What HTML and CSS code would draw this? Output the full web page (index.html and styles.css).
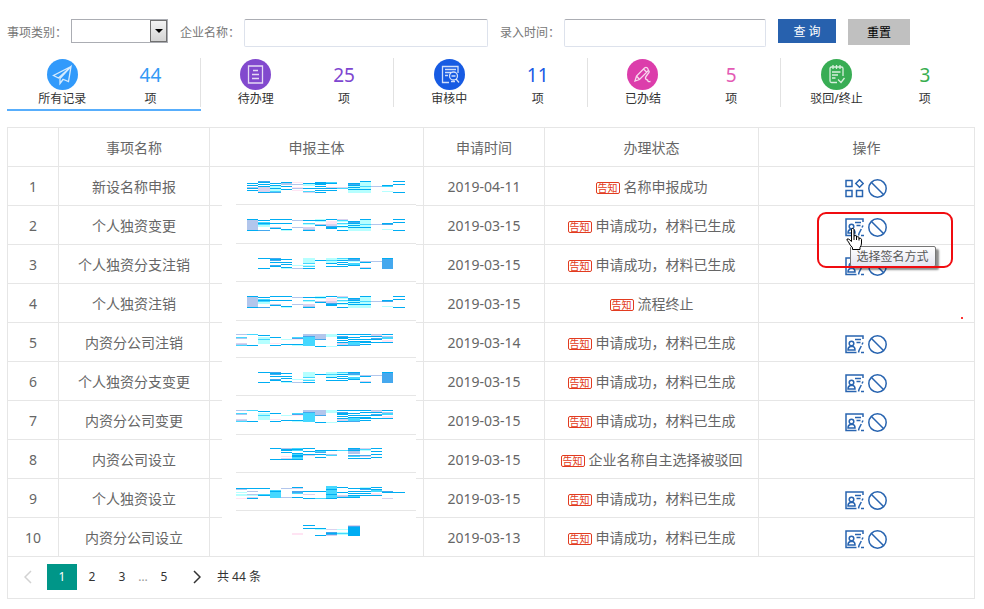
FILE: index.html
```html
<!DOCTYPE html>
<html lang="zh-CN">
    <head>
        <meta charset="utf-8">
        <title>办理记录</title>
        <link rel="stylesheet" href="styles.css">
    </head>
    <body>
        <svg class="icon-defs" aria-hidden="true">
            <symbol id="i-sign" viewBox="0 0 19 19">
                <path d="M11.500 17.500H1V1H18V4M10 4.500h6M11.500 7.500h4"/>
                <circle cx="6.500" cy="8.500" r="2.300"/>
                <path d="M3 15q0-3 2.500-3.500h2.500q2 .5 2 3.500z"/>
                <path d="M18 7.500l-1 2M16.300 11l-2.300 4.500-.5 2M16 17.500h3"/>
            </symbol>
            <symbol id="i-grid" viewBox="0 0 19 19">
                <rect x="1" y="1.500" width="6" height="6"/>
                <rect x="1" y="11.500" width="6" height="6"/>
                <rect x="11.500" y="11.500" width="6" height="6"/>
                <path d="M14.500 .8l3.700 3.700-3.700 3.700-3.700-3.700z"/>
            </symbol>
            <symbol id="i-ban" viewBox="0 0 19 19">
                <circle cx="9.500" cy="9.500" r="8.700"/>
                <path d="M3.500 3.500l12 12"/>
            </symbol>
        </svg>

        <form class="search">
            <label for="s-type">事项类别：</label>
            <span class="select-box">
                <select id="s-type"><option></option></select>
                <span class="select-arrow"></span>
            </span>
            <label for="s-name">企业名称：</label>
            <input type="text" id="s-name" class="s-name">
            <label for="s-time">录入时间：</label>
            <input type="text" id="s-time" class="s-time">
            <button type="button" class="btn-query">查 询</button>
            <button type="reset" class="btn-reset">重置</button>
        </form>

        <ul class="tabs">
            <li class="active">
                <a href="#all">
                    <span class="tab-name">
                        <svg class="tab-icon" viewBox="0 0 31 31">
                            <circle cx="15.500" cy="15.500" r="15.500" fill="#319afb"/>
                            <path d="M24 7.500L6.500 16.500l5 2.500L24 7.500l-2.500 15-6-2.500M24 7.500L13 19.500V24.500l3-4"/>
                        </svg>
                        所有记录
                    </span>
                    <span class="tab-count blue"><b>44</b>项</span>
                </a>
            </li>
            <li>
                <a href="#todo">
                    <span class="tab-name">
                        <svg class="tab-icon" viewBox="0 0 31 31">
                            <circle cx="15.500" cy="15.500" r="15.500" fill="#8249ce"/>
                            <path d="M8.500 7H22.500V24H8.500zM13 11.500h5M12 15.500h7M12 19.500h7"/>
                        </svg>
                        待办理
                    </span>
                    <span class="tab-count purple"><b>25</b>项</span>
                </a>
            </li>
            <li>
                <a href="#check">
                    <span class="tab-name">
                        <svg class="tab-icon" viewBox="0 0 31 31">
                            <circle cx="15.500" cy="15.500" r="15.500" fill="#175be3"/>
                            <path d="M15 23.500H8.500V7.500H24V14M11 10.500h11M11 13.500h6M11 16.500h3"/>
                            <circle cx="19.500" cy="17" r="4"/>
                            <path d="M17.500 17h4M22 20l3 3.500M17 22.500h4"/>
                        </svg>
                        审核中
                    </span>
                    <span class="tab-count navy"><b>11</b>项</span>
                </a>
            </li>
            <li>
                <a href="#done">
                    <span class="tab-name">
                        <svg class="tab-icon" viewBox="0 0 31 31">
                            <circle cx="15.500" cy="15.500" r="15.500" fill="#dc3dab"/>
                            <path d="M8 22l1.500-5 8-8c2-1.500 4.500.5 3.500 3l-8.500 8.500zM9.500 17l3 3.500M16.500 10l3.500 3.500M21.500 11.500c3 1.500-4 5.500-3 8 .5 2 2.500.5 2.500 2.500 0 .8 1 .8 2.500.500"/>
                        </svg>
                        已办结
                    </span>
                    <span class="tab-count pink"><b>5</b>项</span>
                </a>
            </li>
            <li>
                <a href="#back">
                    <span class="tab-name">
                        <svg class="tab-icon" viewBox="0 0 31 31">
                            <circle cx="15.500" cy="15.500" r="15.500" fill="#38ad54"/>
                            <path d="M16 23.500H10.500q-1.500 0-1.500-1.500V9.500Q9 8 10.500 8h10q1.500 0 1.500 1.500V17M12 6v4M15.500 6v4M19 6v4M11 13h8.500M11 16h6M11 19h3.500M17 20.500l3 3 3.500-4.500"/>
                        </svg>
                        驳回/终止
                    </span>
                    <span class="tab-count green"><b>3</b>项</span>
                </a>
            </li>
        </ul>

        <table class="records">
            <colgroup>
                <col class="c-no"><col class="c-item"><col class="c-company">
                <col class="c-date"><col class="c-state"><col>
            </colgroup>
            <thead>
                <tr><th></th><th>事项名称</th><th>申报主体</th><th>申请时间</th><th>办理状态</th><th>操作</th></tr>
            </thead>
            <tbody>
                <tr>
                    <td>1</td><td>新设名称申报</td>
                    <td class="company"><svg id="mosaic" viewBox="2 3 194 385" aria-hidden="true"></svg></td>
                    <td>2019-04-11</td>
                    <td><i class="tag">告知</i>名称申报成功</td>
                    <td>
                        <span class="ops">
                            <a href="#"><svg><use href="#i-grid"/></svg></a>
                            <a href="#"><svg><use href="#i-ban"/></svg></a>
                        </span>
                    </td>
                </tr>
                <tr>
                    <td>2</td><td>个人独资变更</td><td></td><td>2019-03-15</td>
                    <td><i class="tag">告知</i>申请成功，材料已生成</td>
                    <td>
                        <span class="ops hover">
                            <a href="#"><svg><use href="#i-sign"/></svg></a>
                            <a href="#"><svg><use href="#i-ban"/></svg></a>
                            <span class="tip">选择签名方式</span>
                            <span class="mark"></span>
                            <svg class="cursor" viewBox="0 0 17 22">
                                <path d="M5.500 1.500Q5.500.5 6.500.5T8 1.500V8q1-1 2.500 0v1q1.500-.8 2.500.3v1q2-.6 2.500 1V15q0 2.500-1.500 4.500v2H6.500v-2Q4 17.500 2.500 14 .5 12 1 11q1.500-1 4.500 2.500z"/>
                                <path d="M8 8v4M10.500 9v3M13 10v2.500"/>
                            </svg>
                        </span>
                    </td>
                </tr>
                <tr>
                    <td>3</td><td>个人独资分支注销</td><td></td><td>2019-03-15</td>
                    <td><i class="tag">告知</i>申请成功，材料已生成</td>
                    <td>
                        <span class="ops">
                            <a href="#"><svg><use href="#i-sign"/></svg></a>
                            <a href="#"><svg><use href="#i-ban"/></svg></a>
                        </span>
                    </td>
                </tr>
                <tr>
                    <td>4</td><td>个人独资注销</td><td></td><td>2019-03-15</td>
                    <td><i class="tag">告知</i>流程终止</td>
                    <td class="dotted"></td>
                </tr>
                <tr>
                    <td>5</td><td>内资分公司注销</td><td></td><td>2019-03-14</td>
                    <td><i class="tag">告知</i>申请成功，材料已生成</td>
                    <td>
                        <span class="ops">
                            <a href="#"><svg><use href="#i-sign"/></svg></a>
                            <a href="#"><svg><use href="#i-ban"/></svg></a>
                        </span>
                    </td>
                </tr>
                <tr>
                    <td>6</td><td>个人独资分支变更</td><td></td><td>2019-03-15</td>
                    <td><i class="tag">告知</i>申请成功，材料已生成</td>
                    <td>
                        <span class="ops">
                            <a href="#"><svg><use href="#i-sign"/></svg></a>
                            <a href="#"><svg><use href="#i-ban"/></svg></a>
                        </span>
                    </td>
                </tr>
                <tr>
                    <td>7</td><td>内资分公司变更</td><td></td><td>2019-03-15</td>
                    <td><i class="tag">告知</i>申请成功，材料已生成</td>
                    <td>
                        <span class="ops">
                            <a href="#"><svg><use href="#i-sign"/></svg></a>
                            <a href="#"><svg><use href="#i-ban"/></svg></a>
                        </span>
                    </td>
                </tr>
                <tr>
                    <td>8</td><td>内资公司设立</td><td></td><td>2019-03-15</td>
                    <td><i class="tag">告知</i>企业名称自主选择被驳回</td>
                    <td></td>
                </tr>
                <tr>
                    <td>9</td><td>个人独资设立</td><td></td><td>2019-03-15</td>
                    <td><i class="tag">告知</i>申请成功，材料已生成</td>
                    <td>
                        <span class="ops">
                            <a href="#"><svg><use href="#i-sign"/></svg></a>
                            <a href="#"><svg><use href="#i-ban"/></svg></a>
                        </span>
                    </td>
                </tr>
                <tr>
                    <td>10</td><td>内资分公司设立</td><td></td><td>2019-03-13</td>
                    <td><i class="tag">告知</i>申请成功，材料已生成</td>
                    <td>
                        <span class="ops">
                            <a href="#"><svg><use href="#i-sign"/></svg></a>
                            <a href="#"><svg><use href="#i-ban"/></svg></a>
                        </span>
                    </td>
                </tr>
            </tbody>
        </table>

        <div class="pager">
            <a href="#" class="prev" aria-label="上一页"><svg viewBox="0 0 8 14"><path d="M7 1L1 7l6 6"/></svg></a>
            <a href="#" class="current">1</a>
            <a href="#">2</a>
            <a href="#">3</a>
            <span class="dots">…</span>
            <a href="#">5</a>
            <a href="#" class="next" aria-label="下一页"><svg viewBox="0 0 8 14"><path d="M1 1l6 6-6 6"/></svg></a>
            <span class="total">共 44 条</span>
        </div>

        <script src="mosaic.js"></script>
    </body>
</html>
```
FILE: styles.css
```css
body{
    margin: 0 9px 0 7px;
    font-size: 12px;
    font-family: "Noto Sans", "Noto Sans CJK SC", sans-serif;
    color: #333;
    background: #fff;
}

a{
    color: inherit;
    text-decoration: none;
}

.icon-defs{
    position: absolute;
    width: 0;
    height: 0;
}

/* search bar */
.search{
    display: flex;
    align-items: flex-start;
    padding-top: 19px;
    height: 39px;
}
.search label{
    flex: none;
    margin-right: 4px;
    line-height: 28px;
    color: #777;
}
.search input{
    box-sizing: border-box;
    height: 28px;
    margin-right: 12px;
    padding: 0 6px;
    border: 1px solid #dde2ec;
    border-top-color: #abadb3;
    border-radius: 2px;
    min-width: 0;
}
.search .s-name{
    width: 244px;
}
.search .s-time{
    width: 202px;
}
.select-box{
    position: relative;
    flex: none;
    margin-right: 12px;
}
.select-box select{
    appearance: none;
    display: block;
    width: 97px;
    height: 24px;
    border: 1px solid #abadb3;
    border-radius: 0;
    background: #fff;
}
.select-arrow{
    position: absolute;
    top: 1px;
    right: 1px;
    bottom: 1px;
    width: 15px;
    border: 1px solid #707070;
    background: linear-gradient(#f3f3f3, #d4d4d4);
    pointer-events: none;
}
.select-arrow::after{
    content: "";
    position: absolute;
    top: 8px;
    left: 4px;
    border: 4px solid transparent;
    border-top-color: #000;
    border-bottom: 0;
}
.search button{
    flex: none;
    border: 0;
    padding: 0;
    font: inherit;
}
.search .btn-query{
    width: 58px;
    height: 24px;
    margin-right: 12px;
    background: #2761ae;
    color: #fff;
}
.search .btn-reset{
    width: 62px;
    height: 26px;
    background: #c0c0c0;
    color: #000;
}

/* tabs */
.tabs{
    display: flex;
    margin: 0 0 16px;
    padding: 0;
    list-style: none;
}
.tabs li{
    flex: 1;
    padding-bottom: 2px;
    border-bottom: 2px solid transparent;
}
.tabs li.active{
    border-bottom-color: #58aefc;
}
.tabs a{
    display: flex;
    height: 49px;
    padding-right: 16px;
    border-right: 1px solid #e2e2e2;
    line-height: 18px;
}
.tabs li:last-child a{
    border-right-color: transparent;
}
.tab-name, .tab-count{
    display: flex;
    flex-direction: column;
    align-items: center;
}
.tab-name{
    flex: 5;
    padding-top: 1px;
}
.tab-count{
    flex: 3;
}
.tab-icon{
    flex: none;
    width: 31px;
    height: 31px;
}
.tab-icon path, .tab-icon circle + path ~ circle{
    fill: none;
    stroke: #fff;
    stroke-opacity: .8;
    stroke-width: 1.3;
}
.tab-count b{
    flex: none;
    height: 32px;
    line-height: 34px;
    font-size: 19px;
    font-weight: normal;
}
.blue b{ color: #3399f5; }
.purple b{ color: #7e46d0; }
.navy b{ color: #175be6; }
.pink b{ color: #e45bb5; }
.green b{ color: #38ae50; }

/* records */
.records{
    width: 100%;
    table-layout: fixed;
    border-collapse: collapse;
    font-size: 14px;
    color: #666;
}
.records th, .records td{
    height: 36px;
    padding: 2px 0 0;
    border: 1px solid #e6e6e6;
    font-weight: normal;
    line-height: 20px;
    text-align: center;
    white-space: nowrap;
}
.c-no{ width: 51px; }
.c-item{ width: 151px; }
.c-company{ width: 214px; }
.c-date{ width: 121px; }
.c-state{ width: 214px; }

.tag{
    display: inline-block;
    margin-right: 4px;
    padding: 0 1px;
    border: 1px solid #e23b20;
    border-radius: 2px;
    font-size: 10px;
    font-style: normal;
    line-height: 10px;
    color: #e23b20;
}

/* names are masked with one strip over the whole column */
.records .company{
    position: relative;
}
.company svg{
    position: absolute;
    top: 1px;
    left: 12px;
    width: 194px;
    height: 385px;
    background: #fff;
    shape-rendering: crispEdges;
}

.ops{
    display: flex;
    gap: 4px;
    width: 44px;
    margin: 2px auto 0;
}
.ops a, .ops a svg{
    display: block;
    width: 19px;
    height: 19px;
}
.ops a svg{
    fill: none;
    stroke: #2864b0;
    stroke-width: 1.5;
}
.hover{
    position: relative;
}
.tip{
    position: absolute;
    top: 28px;
    left: 5px;
    z-index: 1;
    padding: 0 6px;
    border: 1px solid #767676;
    border-radius: 2px;
    background: linear-gradient(#fff, #e4e5f0);
    box-shadow: 3px 3px 2px rgba(0, 0, 0, .45);
    font-size: 12px;
    line-height: 19px;
    color: #575757;
}
.mark{
    position: absolute;
    top: -6px;
    left: -28px;
    z-index: 2;
    width: 132px;
    height: 52px;
    border: 2px solid #f00c10;
    border-radius: 9px;
}
.cursor{
    position: absolute;
    top: 10px;
    left: 1px;
    z-index: 3;
    width: 17px;
    height: 22px;
    fill: #fff;
    stroke: #000;
}
.dotted{
    position: relative;
}
.dotted::after{
    content: "";
    position: absolute;
    right: 11px;
    bottom: 3px;
    width: 2px;
    height: 2px;
    background: #f33;
}

/* pager */
.pager{
    display: flex;
    align-items: center;
    height: 39px;
    padding-bottom: 2px;
    border: 1px solid #e6e6e6;
    border-top: 0;
    line-height: 26px;
}
.pager a{
    width: 30px;
    height: 26px;
    text-align: center;
}
.pager svg{
    width: 8px;
    height: 14px;
    fill: none;
    stroke: #333;
    stroke-width: 1.5;
    vertical-align: middle;
}
.pager .prev{
    width: 39px;
}
.pager .prev svg{
    stroke: #d2d2d2;
}
.pager .current{
    background: #009688;
    color: #fff;
}
.dots{
    width: 12px;
    text-align: center;
    color: #999;
}
.pager .next{
    width: 36px;
}
.total{
    margin-left: 2px;
}
```
FILE: mosaic.js
```js
// left edges of the mosaic blocks
var edges = [16, 27, 38, 50, 61, 72, 83, 95, 106, 117, 128, 140, 151, 162, 173, 185];
var colors = {
    b: "#00adf3", m: "#45a8ee", c: "#45d8ff", l: "#b6ffff",
    p: "#b2c6ec", v: "#d9d2ee", k: "#ffe4f3"
};

// one string per block column, one letter per pixel row
var nameA = ["", "..b.b.pb.b", "mb.b.bvvvvvb", "..b.bllbllcm", ".bpp.b..b", ".k.p..kp.k", "..bll..b..cv", ".bbb.b.b.b.b", ".cb...vb.b", "......vc", "..bmblblblll", "bllllcllblll", ".....p", "....bc....l", "b..b.......b"];
var nameB = ["", "bppppppppppb", ".b.cbcll...m", "b...b...pb", "b...b.....bl", ".p......p", ".b..cl..vvpb", "lbl..pb", "b.kkkvvmbb", "vcl.cl.bl..b", "..bmblblblll", "bllllcllblll", ".....p", "....bm....l", "b..b.......b"];
var nameC = ["", "", "b.........b", "mbm.b..mb", ".b..b.b..bl", ".......l..p", "lllllc.lc.b", "..b", "llcllb..b", "clb.b.b.b", "bmml.ccb", "...pb....vb", "...p", "bmmmmmmmmmm"];
var nameD = ["p..cp....vpc", "c..........b", ".b.llcllll", "...b.....k.b", ".....l....b", "...cmk....bl", "ppmccccccccc", "pppppm......b", "lll.........l", "b.mbb.b.bvvb", "b..b.b.bcccm", "b.b..b.bb.b", "pvb.mb..b", "b.pcc.kkb"];
var nameE = ["", "", "", "b..........b", "pbb.b...k.vb", "cbc..bcbbccb", "b..b..bv", "..bcm.b..b", "..b...pc", "..c", "bmbppp.mc.b", "vcl....mv.b", "b..b..b..b"];
var nameF = ["..bp..l.ll..k", "..b..p..pl.vb", "..b.....cb", "....cbcccccc", "..p........p", ".bv..mmc...b", ".....b..v...b", ".....b......c", "cccbccccbcccb", ".b....b..vpb", "..b..b.b.bcb", ".lbm.b.b.b", ".b.bcc.kkb", ".....mb.....v", "......b"];
var nameG = ["", "", "", "", "", "........kk", "b..b", "...bl.....b", "....v..mbmv", "....l..lcl", "vmbbbbbbbbb"];

var rows = [[16, nameA], [54, nameB], [93, nameC], [131, nameB], [169, nameD],
            [207, nameC], [245, nameD], [283, nameE], [321, nameF], [360, nameG]];
var lines = [39, 78, 116, 155, 192, 230, 269, 307, 345];

var svg = document.getElementById("mosaic");

function addRect(x, y, width, color){
    var rect = document.createElementNS("http://www.w3.org/2000/svg", "rect");
    rect.setAttribute("x", x);
    rect.setAttribute("y", y);
    rect.setAttribute("width", width);
    rect.setAttribute("height", 1);
    rect.setAttribute("fill", color);
    svg.appendChild(rect);
}

rows.forEach(function(row){
    row[1].forEach(function(column, i){
        for(var y = 0; y < column.length; y++){
            if(column[y] != "."){
                addRect(edges[i], row[0] + y, edges[i + 1] - edges[i], colors[column[y]]);
            }
        }
    });
});

lines.forEach(function(y){
    addRect(16, y, 180, "#e6e6e6");
});
```
